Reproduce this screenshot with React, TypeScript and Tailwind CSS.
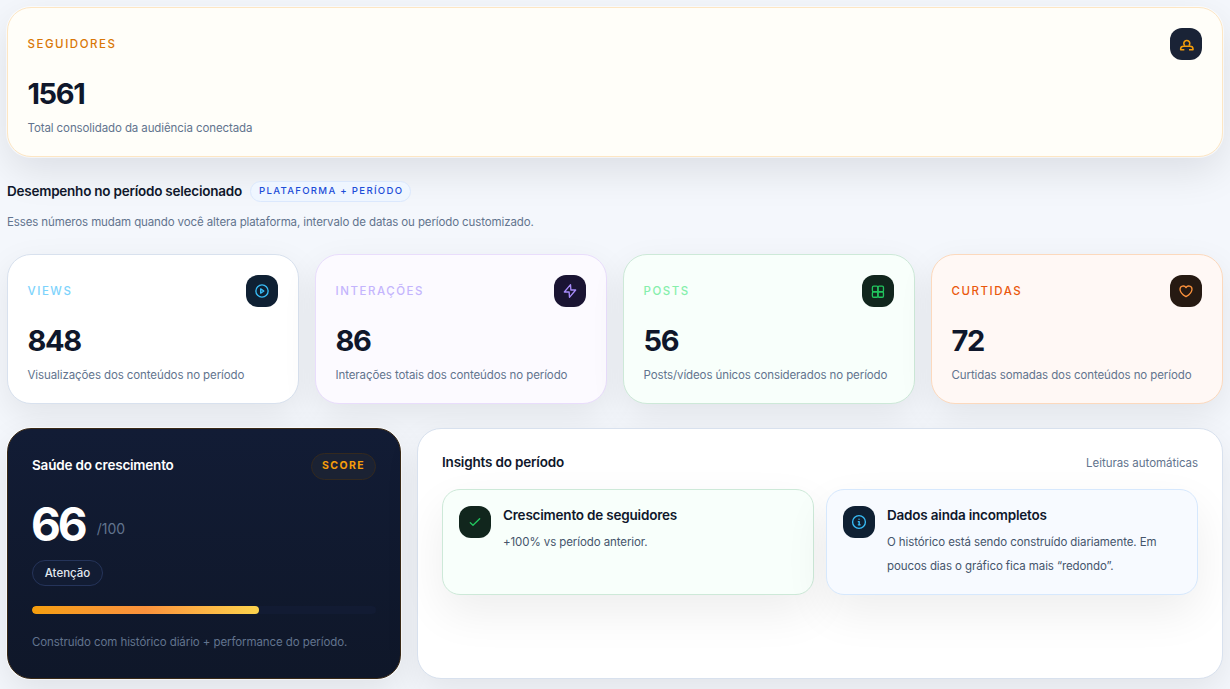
import type { ReactNode } from "react";

const stroke = {
  width: 16,
  height: 16,
  viewBox: "0 0 24 24",
  fill: "none",
  stroke: "currentColor",
  strokeWidth: 2,
  strokeLinecap: "round" as const,
  strokeLinejoin: "round" as const,
};

const AudienceIcon = () => (
  <svg {...stroke} strokeLinecap="butt" strokeWidth={2.3}>
    <path d="M10.200 14.500a4.500 4.500 0 1 1 6 0" />
    <path d="M9.500 20.500H4v-1.200c0-2.500 2-4 4.500-4h9.500c2.500 0 4.500 1.500 4.500 4v1.200h-6" />
  </svg>
);
const PlayIcon = () => (
  <svg {...stroke}>
    <circle cx="12" cy="12" r="9.200" />
    <path d="M10 8.800v6.400l4.800-3.200z" />
  </svg>
);
const BoltIcon = () => (
  <svg {...stroke}>
    <path d="M12.800 2.500 3.500 13.500H10.700L11.200 21.500 20.500 10.500H13.300z" />
  </svg>
);
const GridIcon = () => (
  <svg {...stroke}>
    <rect x="3.600" y="4.800" width="8.300" height="8.300" rx="1.900" />
    <rect x="11.900" y="4.800" width="8.300" height="8.300" rx="1.900" />
    <rect x="3.600" y="13.100" width="8.300" height="8.300" rx="1.900" />
    <rect x="11.900" y="13.100" width="8.300" height="8.300" rx="1.900" />
  </svg>
);
const HeartIcon = () => (
  <svg {...stroke}>
    <path d="M12 20.500s-9-5.200-9-11.200A4.800 4.800 0 0 1 12 7a4.800 4.800 0 0 1 9 2.300c0 6-9 11.200-9 11.200z" />
  </svg>
);
const CheckIcon = () => (
  <svg {...stroke}>
    <path d="M5 13l4 4 10-10" />
  </svg>
);
const InfoIcon = () => (
  <svg {...stroke}>
    <circle cx="12" cy="12" r="9.600" />
    <path d="M11 11.500h1.300V16M11 16.300h2.700M12 7.900h.1" />
  </svg>
);

function IconTile({ className, children }: { className: string; children: ReactNode }) {
  return (
    <div className={`flex size-8 shrink-0 items-center justify-center rounded-xl ${className}`}>{children}</div>
  );
}

type Stat = {
  label: string;
  value: string;
  note: string;
  card: string;
  labelColor: string;
  tile: string;
  icon: ReactNode;
};

function StatCard({ label, value, note, card, labelColor, tile, icon }: Stat) {
  return (
    <section className={`h-[150px] rounded-3xl border py-5 pr-5 pl-[19.500px] ${card}`}>
      <div className="flex h-8 items-center justify-between">
        <span className={`pt-[2px] text-[11.5px] font-medium tracking-[1.55px] ${labelColor}`}>{label}</span>
        <IconTile className={tile}>{icon}</IconTile>
      </div>
      <div className="mt-4 h-9 text-[29px] leading-9 font-bold tracking-[-1.400px] text-slate-900">{value}</div>
      <p className="mt-2 text-[11.5px] leading-4 tracking-[-0.1px] text-slate-500">{note}</p>
    </section>
  );
}

const stats: Stat[] = [
  {
    label: "VIEWS",
    value: "848",
    note: "Visualizações dos conteúdos no período",
    card: "border-[#d8e1ee] bg-white shadow-[0_12px_34px_rgba(0,8,16,0.08)]",
    labelColor: "text-[#7dd3fc]",
    tile: "bg-[#0f2033] text-[#38bdf8]",
    icon: <PlayIcon />,
  },
  {
    label: "INTERAÇÕES",
    value: "86",
    note: "Interações totais dos conteúdos no período",
    card: "border-[#e9ddfc] bg-[#fcfaff] shadow-[0_12px_34px_rgba(0,8,16,0.08)]",
    labelColor: "text-[#c4b5fd]",
    tile: "bg-[#1a1433] text-[#a78bfa]",
    icon: <BoltIcon />,
  },
  {
    label: "POSTS",
    value: "56",
    note: "Posts/vídeos únicos considerados no período",
    card: "border-[#cde9d8] bg-[#f8fffb] shadow-[0_12px_34px_rgba(0,8,16,0.08)]",
    labelColor: "text-[#86efac]",
    tile: "bg-[#11261d] text-[#22c55e]",
    icon: <GridIcon />,
  },
  {
    label: "CURTIDAS",
    value: "72",
    note: "Curtidas somadas dos conteúdos no período",
    card: "border-[#fcd9bd] bg-[#fff8f5] shadow-[0_12px_34px_rgba(0,8,16,0.08)]",
    labelColor: "text-[#ea580c]",
    tile: "bg-[#261a12] text-[#fb923c]",
    icon: <HeartIcon />,
  },
];

function Insight({
  title,
  text,
  card,
  tile,
  icon,
}: {
  title: string;
  text: string;
  card: string;
  tile: string;
  icon: ReactNode;
}) {
  return (
    <article
      className={`flex h-[106px] gap-3 rounded-[18px] border px-4 pt-4 shadow-[0_18px_45px_rgba(0,0,0,0.07)] ${card}`}
    >
      <IconTile className={tile}>{icon}</IconTile>
      <div className="-mt-px">
        <h3 className="text-[13.5px] leading-5 font-semibold tracking-[-0.2px] text-slate-900">{title}</h3>
        <p className="mt-[5px] text-[11.5px] leading-6 tracking-[-0.09px] text-slate-600">{text}</p>
      </div>
    </article>
  );
}

export default function App() {
  return (
    <main className="h-[689px] w-full overflow-hidden bg-[#f4f7fc] px-[7px] pt-[7px] font-['Inter',sans-serif]">
      <StatCard
        label="SEGUIDORES"
        value="1561"
        note="Total consolidado da audiência conectada"
        card="border-[#fde6c4] bg-[#fffef9] shadow-[0_0_0_1px_rgba(255,255,255,0.6),0_14px_40px_rgba(0,8,16,0.1)]"
        labelColor="text-[#d97706]"
        tile="bg-[#1a2336] text-[#f59e0b]"
        icon={<AudienceIcon />}
      />

      <header className="relative mt-6">
        <div className="flex h-5 items-center gap-2">
          <h2 className="text-[13.5px] leading-5 font-semibold tracking-[-0.23px] text-slate-900">
            Desempenho no período selecionado
          </h2>
          <span className="flex h-[21px] items-center rounded-full border border-[#dbe8fd] bg-[#eff6ff] pt-px pr-[7px] pl-2 text-[9.600px] font-medium tracking-[1.29px] text-[#1d4ed8]">
            PLATAFORMA + PERÍODO
          </span>
        </div>
        <p className="mt-[13px] text-[11.5px] leading-4 tracking-[-0.115px] text-slate-500">
          Esses números mudam quando você altera plataforma, intervalo de datas ou período customizado.
        </p>
      </header>

      <div className="mt-6 grid grid-cols-4 gap-4">
        {stats.map((s) => (
          <StatCard key={s.label} {...s} />
        ))}
      </div>

      <div className="mt-6 grid h-[251px] grid-cols-[394px_806px] gap-4">
        <section className="rounded-3xl border border-[#3a2a17] bg-linear-to-b from-[#121c35] to-[#0f1729] px-6 pt-6 shadow-[0_0_0_1px_rgba(255,255,255,0.6),0_12px_34px_rgba(0,8,16,0.09)]">
          <div className="flex items-start justify-between">
            <h2 className="mt-[2px] text-[13.5px] leading-5 font-semibold tracking-[-0.2px] text-white">
              Saúde do crescimento
            </h2>
            <span className="flex h-[27px] w-[65px] items-center justify-center rounded-full border border-[#33291f] bg-[#1b2233] pb-[2px] text-[10.500px] font-bold tracking-[1.4px] text-[#f59e0b]">
              SCORE
            </span>
          </div>
          <div className="mt-5 flex h-12 items-end gap-3">
            <span className="-ml-px text-[46px] leading-12 font-bold tracking-[-3px] text-white">66</span>
            <span className="pb-[9px] text-[14px] leading-5 text-slate-500">/100</span>
          </div>
          <div className="mt-3 flex h-[26px] w-[71px] items-center justify-center rounded-full border border-[#25345a] bg-[#121c33] pt-px text-[11.500px] font-medium text-slate-200">
            Atenção
          </div>
          <div className="mt-5 h-2 overflow-hidden rounded-full bg-[#121b33]">
            <div className="h-full w-[66%] rounded-full bg-linear-to-r from-[#f59e0b] via-[#fb923c] to-[#fcd34d]" />
          </div>
          <p className="mt-5 text-[11.5px] leading-4 tracking-[-0.09px] whitespace-nowrap text-slate-500">
            Construído com histórico diário + performance do período.
          </p>
        </section>

        <section className="rounded-3xl border border-[#d8e1ee] bg-white px-6 pt-6 shadow-[0_12px_34px_rgba(0,8,16,0.08)]">
          <div className="flex h-5 items-center justify-between">
            <h2 className="pb-[2px] text-[13.5px] leading-5 font-semibold tracking-[-0.18px] text-slate-900">
              Insights do período
            </h2>
            <span className="text-[11.5px] leading-4 tracking-[-0.04px] text-slate-500">Leituras automáticas</span>
          </div>
          <div className="mt-4 grid grid-cols-2 gap-3">
            <Insight
              title="Crescimento de seguidores"
              text="+100% vs período anterior."
              card="border-[#cde9d8] bg-[#f8fffb]"
              tile="bg-[#11261d] text-[#22c55e]"
              icon={<CheckIcon />}
            />
            <Insight
              title="Dados ainda incompletos"
              text="O histórico está sendo construído diariamente. Em poucos dias o gráfico fica mais “redondo”."
              card="border-[#d6e8fd] bg-[#f7faff]"
              tile="bg-[#0f2033] text-[#38bdf8]"
              icon={<InfoIcon />}
            />
          </div>
        </section>
      </div>
    </main>
  );
}
